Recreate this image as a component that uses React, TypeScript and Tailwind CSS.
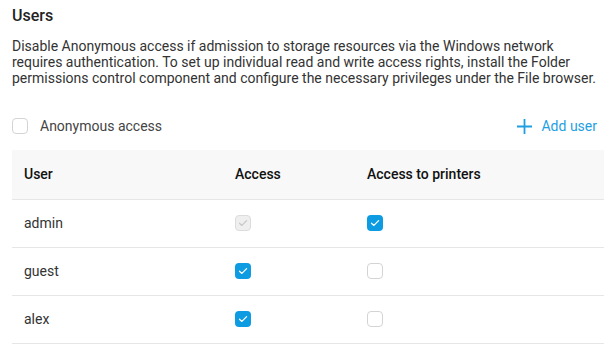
interface UserRow {
  name: string;
  access: 'on' | 'off' | 'locked';
  printers: boolean;
}

const users: UserRow[] = [
  { name: 'admin', access: 'locked', printers: true },
  { name: 'guest', access: 'on', printers: false },
  { name: 'alex', access: 'on', printers: false },
];

function Check({ state }: { state: 'on' | 'off' | 'locked' }) {
  if (state === 'off') {
    return <span className="block w-4 h-4 rounded-[4px] border border-[#d4d4d4] bg-white" />;
  }
  const locked = state === 'locked';
  return (
    <span
      className={`flex items-center justify-center w-4 h-4 rounded-[4px] ${
        locked ? 'bg-[#efefef] border border-[#dcdcdc]' : 'bg-[#0d9be1]'
      }`}
    >
      <svg width="10" height="8" viewBox="0 0 10 8" fill="none">
        <path
          d="M1.5 4.2 L3.9 6.4 L8.6 1.6"
          stroke={locked ? '#c8c8c8' : '#ffffff'}
          strokeWidth="1.3"
          strokeLinecap="round"
          strokeLinejoin="round"
        />
      </svg>
    </span>
  );
}

export default function App() {
  return (
    <div className="w-[614px] h-[350px] bg-white px-3 pt-1 font-['Roboto',sans-serif] text-[#333333]">
      <h2 className="text-[16px] leading-6 font-medium text-[#222222]">Users</h2>
      <p className="mt-[10px] w-[592px] text-[14px] leading-4">
        Disable Anonymous access if admission to storage resources via the Windows network
        requires authentication. To set up individual read and write access rights, install the Folder
        permissions control component and configure the necessary privileges under the File browser.
      </p>

      <div className="mt-[24px] h-8 w-[592px] flex items-center justify-between">
        <label className="flex items-center gap-3 text-[14px] text-[#444444]">
          <Check state="off" />
          Anonymous access
        </label>
        <button className="flex items-center gap-[9px] pr-[7px] text-[14px] text-[#1e9fe2]">
          <svg width="15" height="15" viewBox="0 0 15 15" fill="none">
            <path d="M7.5 0 V15 M0 7.5 H15" stroke="#1e9fe2" strokeWidth="1.8" />
          </svg>
          Add user
        </button>
      </div>

      <table className="mt-2 w-[592px] border-collapse text-[14px]">
        <thead>
          <tr className="h-[49px] bg-[#f8f8f8] border-b border-[#e6e6e6] text-left">
            <th className="w-[211px] px-3 font-medium text-[#111111]">User</th>
            <th className="w-[132px] px-3 font-medium text-[#111111]">Access</th>
            <th className="px-3 font-medium text-[#111111]">Access to printers</th>
          </tr>
        </thead>
        <tbody>
          {users.map((u) => (
            <tr key={u.name} className="h-12 border-b border-[#e6e6e6]">
              <td className="px-3">{u.name}</td>
              <td className="px-3">
                <Check state={u.access} />
              </td>
              <td className="px-3">
                <Check state={u.printers ? 'on' : 'off'} />
              </td>
            </tr>
          ))}
        </tbody>
      </table>
    </div>
  );
}
